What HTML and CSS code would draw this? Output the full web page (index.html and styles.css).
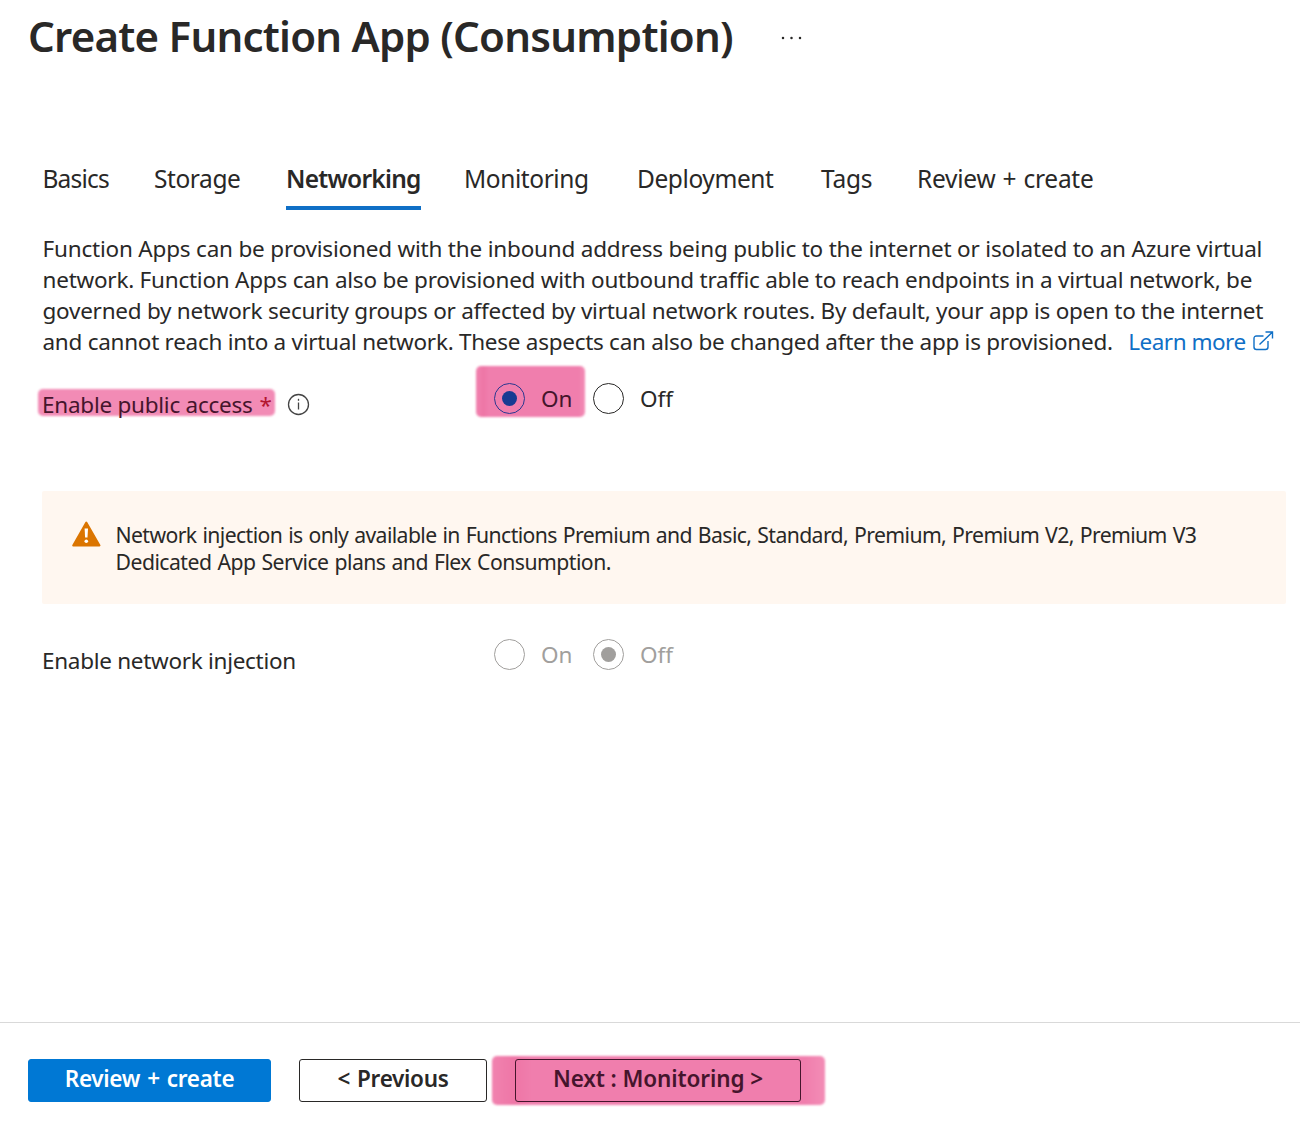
FILE: index.html
```html
<!DOCTYPE html>
<html lang="en">
<head>
<meta charset="utf-8">
<title>Create Function App (Consumption)</title>
<link rel="stylesheet" href="styles.css">
</head>
<body>
<div class="blade">
  <header class="header">
    <h1 class="title">Create Function App (Consumption)</h1>
    <svg class="more" width="22" height="4" viewBox="0 0 22 4"><circle cx="2" cy="2" r="1.250"/><circle cx="10.500" cy="2" r="1.250"/><circle cx="19" cy="2" r="1.250"/></svg>
  </header>
  <nav class="tabs">
    <a class="tab tab-basics">Basics</a>
    <a class="tab tab-storage">Storage</a>
    <a class="tab tab-networking active">Networking</a>
    <a class="tab tab-monitoring">Monitoring</a>
    <a class="tab tab-deployment">Deployment</a>
    <a class="tab tab-tags">Tags</a>
    <a class="tab tab-review">Review + create</a>
  </nav>
  <main class="content">
    <p class="intro">
      <span class="l1">Function Apps can be provisioned with the inbound address being public to the internet or isolated to an Azure virtual</span><br>
      <span class="l2">network. Function Apps can also be provisioned with outbound traffic able to reach endpoints in a virtual network, be</span><br>
      <span class="l3">governed by network security groups or affected by virtual network routes. By default, your app is open to the internet</span><br>
      <span class="l4">and cannot reach into a virtual network. These aspects can also be changed after the app is provisioned.</span><a class="learn">Learn more<svg width="21" height="20" viewBox="0 0 21 20"><path d="M10.500 5H3.500Q1 5 1 7.500V16Q1 18.500 3.500 18.500H12.500Q15 18.500 15 16V10M6.500 13.500L19.500 1M12.500 1H19.500V7.500"/></svg></a>
    </p>
    <div class="row row-access">
      <div class="label"><span class="mark mark-label"><span class="t-access">Enable public access</span><span class="star">*</span></span>
        <svg class="info" width="23" height="23" viewBox="0 0 23 23"><circle cx="11.500" cy="11.500" r="10"/><path d="M11.500 9.500V16.500"/><path d="M11.500 5.800V7.800"/></svg>
      </div>
      <div class="choices">
        <span class="choice mark mark-on"><i class="radio checked"></i>On</span>
        <span class="choice"><i class="radio"></i>Off</span>
      </div>
    </div>
    <div class="warning">
      <svg width="30" height="27" viewBox="0 0 30 27"><path class="tri" d="M14.300 1.500L27.500 24.500H1.200Z"/><path class="bang" d="M12.600 7.500H16L15.500 16.500H13.100Z"/><circle class="bang" cx="14.300" cy="20.300" r="1.800"/></svg>
      <p><span class="w1">Network injection is only available in Functions Premium and Basic, Standard, Premium, Premium V2, Premium V3</span><br><span class="w2">Dedicated App Service plans and Flex Consumption.</span></p>
    </div>
    <div class="row row-injection">
      <div class="label"><span class="t-injection">Enable network injection</span></div>
      <div class="choices disabled">
        <span class="choice"><i class="radio"></i>On</span>
        <span class="choice"><i class="radio checked"></i>Off</span>
      </div>
    </div>
  </main>
  <footer class="footer">
    <button class="btn primary">Review + create</button>
    <button class="btn prev">&lt; Previous</button>
    <span class="mark mark-next"><button class="btn next">Next : Monitoring &gt;</button></span>
  </footer>
</div>
</body>
</html>
```
FILE: styles.css
```css
* { box-sizing: border-box; }
body { margin: 0; background: #fff; color: #292827; font-family: "Noto Sans", "Open Sans", sans-serif; }
.blade { width: 1300px; height: 1128px; display: flex; flex-direction: column; overflow: hidden; }
.header { display: flex; height: 162px; padding: 7px 0 0 28px; }
.title { margin: 0; width: 753px; font-size: 42px; line-height: 58px; font-weight: 600; letter-spacing: -0.76px; white-space: nowrap; }
.more { margin-top: 29px; fill: #292827; }
.tabs { display: grid; grid-template-columns: 112px 132px 178px 173px 184px 96px 200px; padding-left: 42px; height: 48px; font-size: 24.5px; line-height: 34px; }
.tab { justify-self: start; height: 48px; white-space: nowrap; }
.tab.active { font-weight: 600; width: 135px; border-bottom: 4px solid #0f6fc6; }
.tab-basics { letter-spacing: -0.8px; padding-left: 0.5px; }
.tab-storage { letter-spacing: -0.42px; }
.tab-networking { letter-spacing: -0.75px; }
.tab-monitoring { letter-spacing: -0.42px; }
.tab-deployment { letter-spacing: -0.42px; }
.tab-tags { letter-spacing: -0.2px; }
.tab-review { letter-spacing: -0.25px; word-spacing: 1px; }
.content { flex: 1; padding: 23px 14px 0 42px; }
.intro { margin: 0 0 0 0.5px; font-size: 22.5px; line-height: 31px; white-space: nowrap; }
.l1 { letter-spacing: -0.194px; }
.l2 { letter-spacing: -0.232px; }
.l3 { letter-spacing: -0.257px; }
.l4 { letter-spacing: -0.27px; }
.learn { color: #0f6fc6; margin-left: 15.5px; letter-spacing: -0.5px; }
.learn svg { margin-left: 7px; position: relative; top: 1px; fill: none; stroke: #0f6fc6; stroke-width: 1.4; }
.row { display: flex; font-size: 22.5px; line-height: 31px; white-space: nowrap; }
.row-access { height: 134px; }
.label { width: 452px; display: flex; }
.row-access .label { padding-top: 32px; }
.t-access { letter-spacing: -0.25px; }
.t-injection { letter-spacing: -0.29px; }
.mark { position: relative; z-index: 0; }
.mark::before { content: ""; position: absolute; z-index: -1; background: linear-gradient(90deg, #f182af, #ee76a6 7%, #f07ead 12%, #f07ead 94%, #f38db6); border-radius: 5px; filter: blur(1px); }
.mark-label { color: #45152c; width: 229px; }
.mark-label::before { left: -4px; right: -4px; top: 0; height: 27px; background: #f28bb5; }
.star { color: #b3152f; margin-left: 7px; }
.info { margin: 4px 0 0 16px; fill: none; stroke: #444; stroke-width: 1.3; }
.choices { display: flex; padding-top: 26px; line-height: 32px; }
.choice { display: flex; width: 99px; height: 32px; }
.radio { width: 31px; height: 31px; border: 1.5px solid #292827; border-radius: 50%; margin-right: 16px; display: grid; place-items: center; }
.radio.checked::after { content: ""; width: 15px; height: 15px; border-radius: 50%; background: currentColor; }
.mark-on { color: #45152c; }
.mark-on .radio { color: #173b92; border-color: #2b3890; }
.mark-on::before { left: -18px; top: -17px; width: 109px; height: 51px; }
.warning { display: flex; height: 113px; padding: 30px 0 0 30px; background: #fff7f0; border-radius: 2px; font-size: 21.2px; line-height: 27px; white-space: nowrap; }
.warning p { margin: 0 0 0 13.5px; }
.w1 { letter-spacing: -0.6px; word-spacing: 1px; }
.w2 { letter-spacing: -0.52px; word-spacing: 1px; }
.tri { fill: #db7500; stroke: #db7500; stroke-width: 2; stroke-linejoin: round; }
.bang { fill: #fff; }
.row-injection .label { padding-top: 41px; }
.row-injection .choices { padding-top: 35px; color: #a19f9d; }
.disabled .radio { border-color: #a19f9d; }
.footer { height: 106px; border-top: 1px solid #d9d9d9; display: flex; padding: 36px 0 0 28px; }
.btn { height: 43px; border: 1px solid #292827; border-radius: 3px; background: #fff; color: #292827; font: 600 22.5px/38px "Noto Sans", "Open Sans", sans-serif; letter-spacing: -0.3px; word-spacing: 1.5px; padding: 0 0 3px; white-space: nowrap; }
.primary { width: 243px; background: #0078d4; border-color: #0078d4; color: #fff; }
.prev { width: 188px; margin: 0 28px; }
.next { width: 286px; background: none; color: #45152c; border-color: #45152c; letter-spacing: -0.1px; word-spacing: 0; }
.mark-next::before { left: -23px; right: -24px; top: -3px; height: 49px; }
```
